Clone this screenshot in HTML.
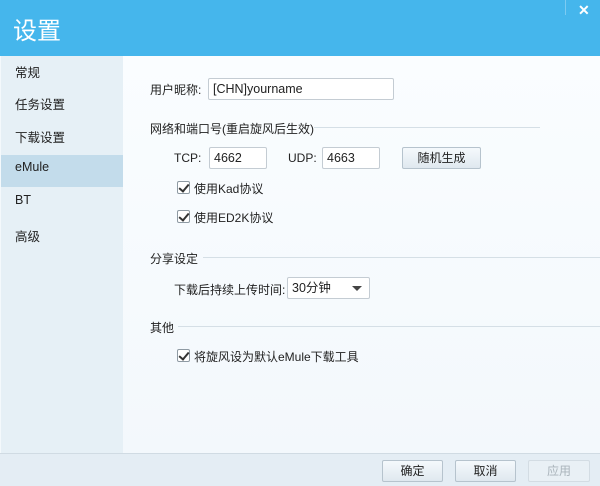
<!DOCTYPE html>
<html><head><meta charset="utf-8"><style>
*{margin:0;padding:0;box-sizing:border-box}
body{width:600px;height:486px;overflow:hidden;font-family:"Liberation Sans","Noto Sans CJK SC",sans-serif;font-size:12px;color:#222;position:relative;background:#f4f9fc}
.hd{position:absolute;left:0;top:0;width:600px;height:56px;background:#45b6ec}
.hd .t{position:absolute;left:13px;top:11px;font-size:24px;color:#fff}
.hd .x{position:absolute;left:578px;top:2px;color:#fff;font-size:14px;font-weight:bold}
.hd .sep{position:absolute;left:565px;top:0;width:1px;height:15px;background:#7ccbf2}
.sb{position:absolute;left:1px;top:56px;width:122px;height:397px;background:#e6f0f6}
.sb div{position:absolute;left:14px;font-size:12.5px}
.sel{position:absolute;left:1px;top:155px;width:122px;height:32px;background:#c3dceb}
.ct{position:absolute;left:123px;top:56px;width:477px;height:397px;background:linear-gradient(#fafdff,#f3f8fc)}
.a{position:absolute;white-space:nowrap}
.in{position:absolute;background:#fff;border:1px solid #c4ccd3;border-radius:2px;padding-left:4px;font-size:12.5px;line-height:20px}
.ln{position:absolute;height:1px;background:#d5dfe6}
.btn{position:absolute;border:1px solid #b6c3cd;border-radius:2px;background:linear-gradient(#f5f9fc,#dfe8ef);text-align:center;line-height:20px}
.cb{position:absolute;width:13px;height:13px;border:1px solid #8e9aa3;background:#fff;border-radius:2px}
.cb:after{content:"";position:absolute;left:3px;top:0px;width:4px;height:8px;border:solid #333;border-width:0 2px 2px 0;transform:rotate(40deg)}
.ft{position:absolute;left:0;top:453px;width:600px;height:33px;background:#e4edf4;border-top:1px solid #d0dbe3}
</style></head><body>
<div class="hd"><div class="t">设置</div><div class="sep"></div><div class="x">✕</div></div>
<div class="sb"></div>
<div class="sel"></div>
<div class="sb" style="background:none">
<div style="top:6px">常规</div><div style="top:38px">任务设置</div><div style="top:71px">下载设置</div><div style="top:104px">eMule</div><div style="top:137px">BT</div><div style="top:170px">高级</div>
</div>
<div class="ct"></div>
<div class="a" style="left:150px;top:81px">用户昵称:</div>
<div class="in" style="left:208px;top:78px;width:186px;height:22px">[CHN]yourname</div>
<div class="a" style="left:150px;top:120px">网络和端口号(重启旋风后生效)</div>
<div class="ln" style="left:314px;top:127px;width:226px"></div>
<div class="a" style="left:174px;top:151px">TCP:</div>
<div class="in" style="left:209px;top:147px;width:58px;height:22px">4662</div>
<div class="a" style="left:288px;top:151px">UDP:</div>
<div class="in" style="left:322px;top:147px;width:58px;height:22px">4663</div>
<div class="btn" style="left:402px;top:147px;width:79px;height:22px">随机生成</div>
<div class="cb" style="left:177px;top:181px"></div><div class="a" style="left:194px;top:180px">使用Kad协议</div>
<div class="cb" style="left:177px;top:210px"></div><div class="a" style="left:194px;top:209px">使用ED2K协议</div>
<div class="a" style="left:150px;top:250px">分享设定</div>
<div class="ln" style="left:203px;top:257px;width:397px"></div>
<div class="a" style="left:174px;top:281px">下载后持续上传时间:</div>
<div class="in" style="left:287px;top:277px;width:83px;height:22px">30分钟<span style="position:absolute;left:64px;top:8px;width:0;height:0;border:5px solid transparent;border-top:5px solid #444;border-bottom:0"></span></div>
<div class="a" style="left:150px;top:319px">其他</div>
<div class="ln" style="left:178px;top:326px;width:422px"></div>
<div class="cb" style="left:177px;top:349px"></div><div class="a" style="left:194px;top:348px">将旋风设为默认eMule下载工具</div>
<div class="ft"></div>
<div class="btn" style="left:382px;top:460px;width:61px;height:22px">确定</div>
<div class="btn" style="left:455px;top:460px;width:61px;height:22px">取消</div>
<div class="btn" style="left:528px;top:460px;width:62px;height:22px;color:#aab4bb;border-color:#d3dce3;background:#e9f0f5">应用</div>
</body></html>
